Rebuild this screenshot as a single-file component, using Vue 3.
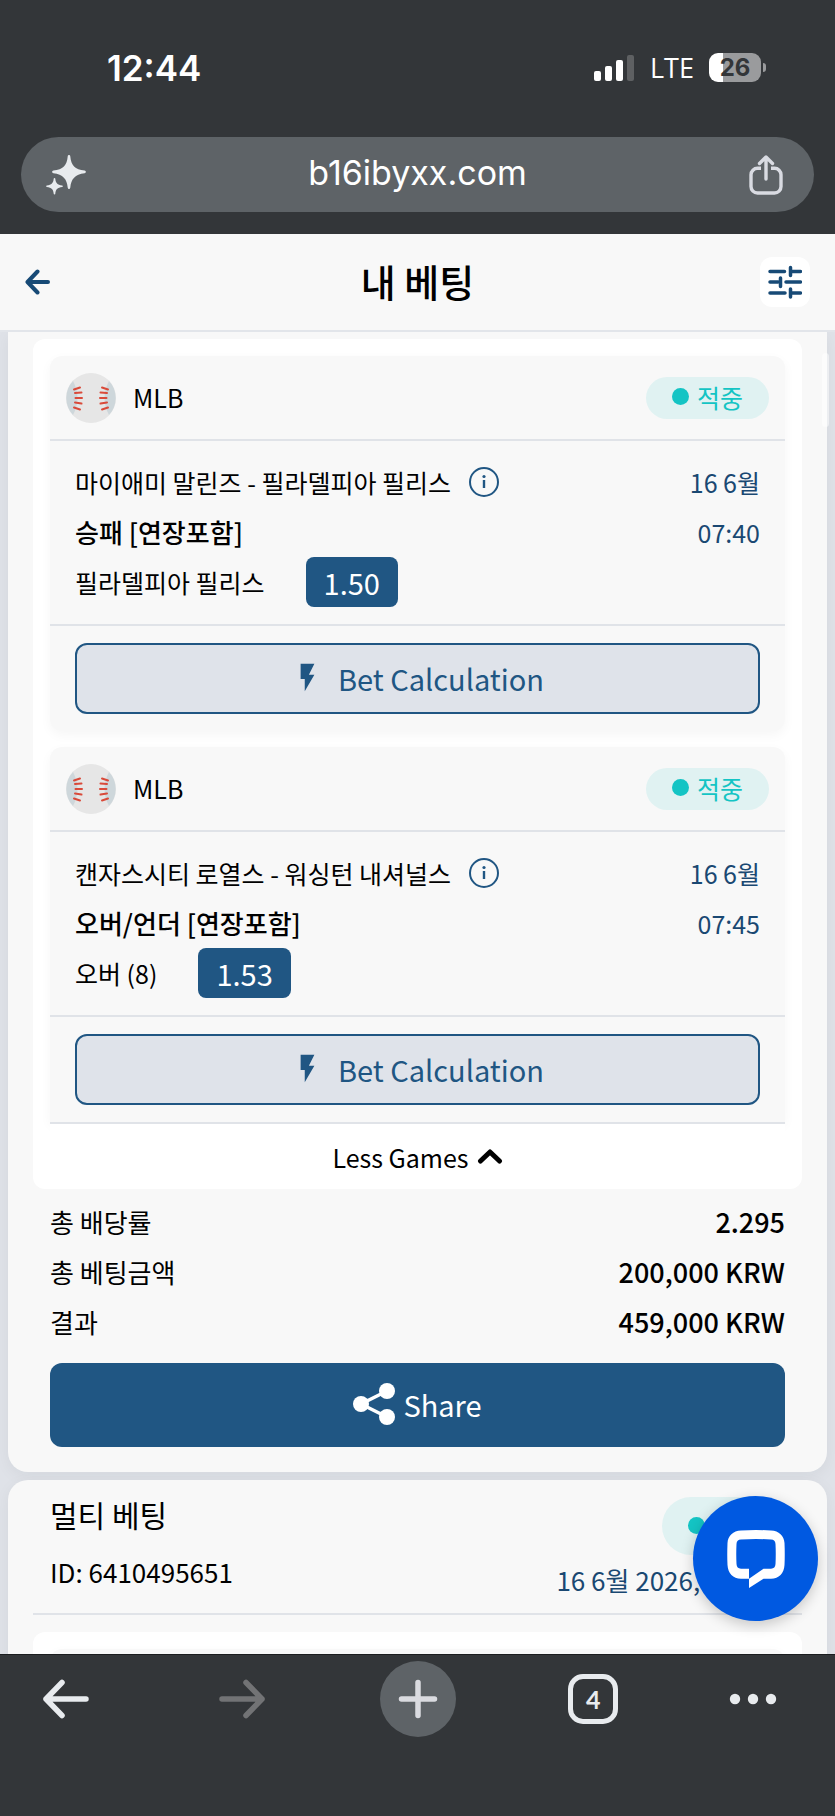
<script setup>
const games = [
  {
    id: 1,
    league: 'MLB',
    status: '적중',
    teams: '마이애미 말린즈 - 필라델피아 필리스',
    date: '16 6월',
    time: '07:40',
    market: '승패 [연장포함]',
    pick: '필라델피아 필리스',
    odds: '1.50',
  },
  {
    id: 2,
    league: 'MLB',
    status: '적중',
    teams: '캔자스시티 로열스 - 워싱턴 내셔널스',
    date: '16 6월',
    time: '07:45',
    market: '오버/언더 [연장포함]',
    pick: '오버 (8)',
    odds: '1.53',
  },
]

const totals = [
  { label: '총 배당률', value: '2.295' },
  { label: '총 베팅금액', value: '200,000 KRW' },
  { label: '결과', value: '459,000 KRW' },
]
</script>

<template>
  <div class="screen">
    <header class="chrome">
      <div class="status">
        <span class="clock">12:44</span>
        <div class="indicators">
          <svg width="41" height="28" viewBox="0 0 41 28" aria-hidden="true">
            <rect x="0" y="17" width="7" height="10" rx="2" fill="#fff" />
            <rect x="11" y="12" width="7" height="15" rx="2" fill="#fff" />
            <rect x="22" y="6" width="7" height="21" rx="2" fill="#fff" />
            <rect x="33" y="1" width="7" height="26" rx="2" fill="#5e6062" />
          </svg>
          <span class="network">LTE</span>
          <div class="battery"><span class="level">26</span></div>
        </div>
      </div>
      <div class="address">
        <button class="plain" aria-label="Assistant">
          <svg width="42" height="42" viewBox="0 0 42 42" fill="#e8ebee">
            <path d="M24 1c.8 0 1.200.6 1.300 1.400C26 11 30 15.400 39.600 16.600c1.700.2 1.700 2.400 0 2.600C30 20.400 26 25 25.300 33.500 25.200 34.400 24.800 35 24 35s-1.200-.6-1.300-1.500C22 25 18 20.400 8.400 19.200c-1.700-.2-1.700-2.400 0-2.600C18 15.400 22 11 22.700 2.400 22.800 1.600 23.200 1 24 1z" />
            <path d="M9.500 24c.5 0 .7.400.8.800.3 4.200 2.200 6.200 6.800 6.700 1 .1 1 1.400 0 1.500-4.600.5-6.500 2.500-6.800 6.700-.1.500-.3.800-.8.800s-.7-.3-.8-.8C8.400 35.500 6.500 33.500 1.900 33c-1-.1-1-1.400 0-1.500 4.600-.5 6.500-2.500 6.800-6.700.1-.4.300-.8.800-.8z" />
          </svg>
        </button>
        <span class="url">b16ibyxx.com</span>
        <button class="plain" aria-label="Share page">
          <svg width="36" height="42" viewBox="0 0 36 42" fill="none" stroke="#d9dbe2" stroke-width="3.400">
            <path d="M13 14.300H9.500a6.500 6.500 0 0 0-6.500 6.500V32.500A6.500 6.500 0 0 0 9.500 39H26.500A6.500 6.500 0 0 0 33 32.500V20.800a6.500 6.500 0 0 0-6.500-6.500H23" />
            <path d="M18 25V3.500M11.500 9.500 18 3l6.500 6.500" stroke-linecap="round" stroke-linejoin="round" />
          </svg>
        </button>
      </div>
    </header>

    <div class="topbar">
      <button class="plain back" aria-label="Back">
        <svg width="26" height="26" viewBox="0 0 26 26" fill="none" stroke="#174a76" stroke-width="4" stroke-linecap="round" stroke-linejoin="round">
          <path d="M23 13H3M12.500 2.500 2.500 13l10 10.500" />
        </svg>
      </button>
      <h1>내 베팅</h1>
      <button class="filter" aria-label="Filter">
        <svg width="34" height="34" viewBox="0 0 34 34" fill="none" stroke="#174a76" stroke-width="3.500" stroke-linecap="round">
          <path d="M2 6.500h14.500M22.500 2.500v8M24 6.500h8.500M2 17h8M12.500 13v8.500M18 17h14.500M2 28h15M22.500 24v8M24 28h8.500" />
        </svg>
      </button>
    </div>

    <main class="content">
      <article class="ticket first">
        <div class="panel">
          <section v-for="game in games" :key="game.id" class="game">
            <div class="game-head">
              <svg width="50" height="50" viewBox="0 0 50 50" aria-hidden="true">
                <circle cx="25" cy="25" r="25" fill="#e6e6e6" />
                <path d="M7 8a25 25 0 0 0 0 34q9-17 0-34zM43 8a25 25 0 0 1 0 34q-9-17 0-34z" fill="#ced7db" />
                <g stroke="#d94a3a" stroke-width="2" stroke-linecap="round">
                  <path d="m8 16.500 6-2M9 20l6.500-.500M9.500 25H16M9 29.500l6.500 1M8 34.500l6 2M42 16.500l-6-2M41 20l-6.500-.500M40.500 25H34M41 29.500l-6.500 1M42 34.500l-6 2" />
                </g>
              </svg>
              <span class="league">{{ game.league }}</span>
              <span class="badge"><i class="dot"></i>{{ game.status }}</span>
            </div>
            <div class="game-body">
              <div class="line">
                <span>{{ game.teams }}</span>
                <button class="plain info" aria-label="Match info">
                  <svg width="30" height="30" viewBox="0 0 30 30">
                    <circle cx="15" cy="15" r="14" fill="none" stroke="#205683" stroke-width="2" />
                    <path d="M15 13v8" stroke="#205683" stroke-width="2.400" />
                    <circle cx="15" cy="9.500" r="1.600" fill="#205683" />
                  </svg>
                </button>
                <span class="when">{{ game.date }}</span>
              </div>
              <div class="line">
                <strong>{{ game.market }}</strong>
                <span class="when">{{ game.time }}</span>
              </div>
              <div class="line">
                <span>{{ game.pick }}</span>
                <span class="odds">{{ game.odds }}</span>
              </div>
            </div>
            <div class="game-foot">
              <button class="calc">
                <svg width="33" height="33" viewBox="0 0 24 24" fill="#205683" aria-hidden="true">
                  <path d="M7 2v11h3v9l7-12h-4l4-8z" />
                </svg>
                Bet Calculation
              </button>
            </div>
          </section>
          <button class="less">
            Less Games
            <svg width="26" height="18" viewBox="0 0 26 18" fill="none" stroke="#000" stroke-width="5" stroke-linecap="round" stroke-linejoin="round" aria-hidden="true">
              <path d="m3.500 13 9.500-9 9.500 9" />
            </svg>
          </button>
        </div>
        <dl class="totals">
          <div v-for="row in totals" :key="row.label" class="total">
            <dt>{{ row.label }}</dt>
            <dd>{{ row.value }}</dd>
          </div>
        </dl>
        <button class="share">
          <svg width="42" height="42" viewBox="0 0 42 42" fill="#fff" aria-hidden="true">
            <path d="M34 8 8 21l26 13" fill="none" stroke="#fff" stroke-width="3.500" />
            <circle cx="34" cy="8" r="8" />
            <circle cx="8" cy="21" r="8" />
            <circle cx="34" cy="34" r="8" />
          </svg>
          Share
        </button>
      </article>

      <article class="ticket">
        <div class="ticket-head">
          <div class="ticket-side">
            <h2>멀티 베팅</h2>
            <span class="ticket-id">ID: 6410495651</span>
          </div>
          <div class="ticket-side end">
            <span class="badge tall"><i class="dot"></i>적중</span>
            <span class="ticket-date">16 6월 2026, 07:22</span>
          </div>
        </div>
        <div class="panel">
          <section class="game stub"></section>
        </div>
      </article>

      <div class="thumb"></div>
      <button class="chat" aria-label="Open chat">
        <svg width="58" height="58" viewBox="0 0 58 58" aria-hidden="true">
          <path
            fill="#fff"
            fill-rule="evenodd"
            d="M14 .5Q29-.5 44 .5C52 1 57 5.500 57.500 13q.5 11.500 0 22C57 43.500 52 48.500 44 48.700H36.500L22 58V48.700H14C6 48.500 1 43.500.5 35Q0 25 .5 13C1 5.500 6 1 14 .5zM14 9.500c-3 .2-4.300 1.500-4.500 4.500q-.5 10 0 20c.2 3 1.500 4.500 4.500 4.700h8v10l14.500-10H44c3-.2 4.300-1.700 4.500-4.700q.5-10 0-20c-.2-3-1.500-4.300-4.500-4.500q-15-1-30 0z"
          />
        </svg>
      </button>
    </main>

    <nav class="toolbar">
      <button class="plain tool" aria-label="Back">
        <svg width="48" height="40" viewBox="0 0 48 40" fill="none" stroke="#e8ebee" stroke-width="5.500" stroke-linecap="round" stroke-linejoin="round">
          <path d="M44 20H4M20 3.500 4 20l16 16.500" />
        </svg>
      </button>
      <button class="plain tool" aria-label="Forward">
        <svg width="48" height="40" viewBox="0 0 48 40" fill="none" stroke="#727375" stroke-width="5.500" stroke-linecap="round" stroke-linejoin="round">
          <path d="M4 20h40M28 3.500 44 20 28 36.500" />
        </svg>
      </button>
      <button class="plain tool add" aria-label="New tab">
        <svg width="40" height="40" viewBox="0 0 40 40" fill="none" stroke="#dadbe0" stroke-width="5.500" stroke-linecap="round">
          <path d="M20 3.500v33M3.500 20h33" />
        </svg>
      </button>
      <button class="plain tool" aria-label="Tabs"><span class="tabs">4</span></button>
      <button class="plain tool more" aria-label="More">
        <svg width="48" height="12" viewBox="0 0 48 12" fill="#e8ebee">
          <circle cx="6" cy="6" r="5.200" />
          <circle cx="24" cy="6" r="5.200" />
          <circle cx="42" cy="6" r="5.200" />
        </svg>
      </button>
    </nav>
  </div>
</template>

<style>
body {
  margin: 0;
}
</style>

<style scoped>
* {
  box-sizing: border-box;
}
.screen {
  display: flex;
  flex-direction: column;
  height: 100vh;
  background: #dfe2e8;
  color: #000;
  font-family: "Noto Sans CJK KR", "Noto Sans", sans-serif;
  font-size: 25px;
  line-height: 36px;
}
button {
  margin: 0;
  border: 0;
  font: inherit;
  color: inherit;
  cursor: pointer;
}
svg {
  display: block;
  flex: none;
}
.plain {
  display: flex;
  align-items: center;
  justify-content: center;
  padding: 0;
  background: none;
}
.chrome {
  flex: none;
  padding: 0 21px 22px;
  background: #333639;
  color: #fff;
  font-family: Inter, "Liberation Sans", sans-serif;
}
.status {
  display: flex;
  align-items: center;
  justify-content: space-between;
  height: 137px;
  padding: 0 48px 2px 86px;
}
.clock {
  font-size: 35px;
  font-weight: 600;
}
.indicators {
  display: flex;
  align-items: center;
  gap: 15px;
}
.network {
  font-family: "Open Sans", sans-serif;
  font-size: 27px;
  font-weight: 500;
}
.battery {
  position: relative;
  width: 52px;
  height: 29px;
  margin-right: 5px;
  border-radius: 9px;
  background: linear-gradient(90deg, #fff 14px, #9a9b9d 14px);
  color: #333639;
  font-size: 24px;
  font-weight: 700;
  line-height: 29px;
  text-align: center;
}
.battery::after {
  content: "";
  position: absolute;
  top: 10px;
  right: -5px;
  width: 3px;
  height: 9px;
  border-radius: 0 4px 4px 0;
  background: #9a9b9d;
}
.address {
  display: flex;
  align-items: center;
  justify-content: space-between;
  height: 75px;
  padding: 0 30px 0 24px;
  border-radius: 38px;
  background: #5e6367;
}
.url {
  padding-bottom: 3px;
  font-size: 34px;
}
.topbar {
  flex: none;
  display: grid;
  grid-template-columns: 1fr auto 1fr;
  align-items: center;
  height: 98px;
  padding: 0 25px;
  border-bottom: 2px solid #e2e5ea;
  background: #f8f8f8;
}
.back {
  justify-self: start;
}
h1 {
  margin: 0;
  padding-bottom: 2px;
  font-size: 38px;
  font-weight: 500;
  line-height: 50px;
}
.filter {
  display: grid;
  place-items: center;
  justify-self: end;
  width: 50px;
  height: 50px;
  padding: 0;
  border-radius: 12px;
  background: #fff;
}
.content {
  position: relative;
  display: flex;
  flex: 1;
  flex-direction: column;
  gap: 8px;
  min-height: 0;
  padding: 0 8px;
  overflow: hidden;
}
.ticket {
  flex: none;
  padding: 0 25px 25px;
  border-radius: 20px;
  background: #f8f8f8;
  box-shadow: 0 4px 16px rgba(0, 40, 30, 0.05);
}
.first {
  padding-top: 7px;
  border-radius: 0 0 20px 20px;
}
.panel {
  display: flex;
  flex-direction: column;
  padding: 17px 17px 0;
  border-radius: 12px;
  background: #fff;
}
.game {
  border-radius: 12px;
  background: #f8f8f8;
  box-shadow: 0 4px 12px rgba(0, 0, 0, 0.04);
}
.game + .game {
  margin-top: 16px;
  border-radius: 12px 12px 0 0;
}
.stub {
  height: 60px;
}
.game-head {
  display: flex;
  align-items: center;
  height: 85px;
  padding: 0 16px;
  border-bottom: 2px solid #e0e3e8;
}
.league {
  margin-left: 17px;
  padding-bottom: 2px;
}
.badge {
  display: flex;
  align-items: center;
  gap: 8px;
  height: 42px;
  margin-left: auto;
  padding: 0 26px 2px;
  border-radius: 30px;
  background: #e0f2f2;
  color: #14c4c4;
}
.tall {
  height: 58px;
}
.dot {
  width: 17px;
  height: 17px;
  border-radius: 50%;
  background: #14c4c4;
}
.game-body {
  padding: 16px 25px 17px;
  border-bottom: 2px solid #e0e3e8;
}
.line {
  display: flex;
  align-items: center;
  height: 50px;
}
.line strong {
  font-size: 26px;
  font-weight: 500;
}
.info {
  margin-left: 18px;
}
.when {
  margin-left: auto;
  color: #1a4872;
}
.odds {
  margin-left: 41px;
  padding: 0 18px;
  border-radius: 8px;
  background: #205683;
  color: #fff;
  font-size: 29px;
  line-height: 50px;
}
.game-foot {
  padding: 17px 25px;
}
.calc {
  display: flex;
  align-items: center;
  justify-content: center;
  gap: 14px;
  width: 100%;
  height: 71px;
  padding: 0 0 2px;
  border: 2px solid #205683;
  border-radius: 12px;
  background: #dfe3ea;
  color: #205683;
  font-size: 29px;
}
.less {
  display: flex;
  align-items: center;
  justify-content: center;
  gap: 8px;
  height: 67px;
  padding: 0;
  border-top: 2px solid #e0e3e8;
  background: #fff;
  border-radius: 0 0 12px 12px;
}
.totals {
  margin: 0;
  padding: 8px 17px 16px;
  font-size: 26px;
}
.total {
  display: flex;
  align-items: center;
  justify-content: space-between;
  height: 50px;
}
dd {
  margin: 0;
  font-size: 27px;
  font-weight: 500;
}
.share {
  display: flex;
  align-items: center;
  justify-content: center;
  gap: 8px;
  width: calc(100% - 34px);
  height: 84px;
  margin: 0 17px;
  padding: 0 0 2px;
  border-radius: 12px;
  background: #205683;
  color: #fff;
  font-size: 29px;
}
.ticket-head {
  display: flex;
  justify-content: space-between;
  height: 135px;
  margin-bottom: 17px;
  padding: 14px 17px 0;
  border-bottom: 2px solid #e0e3e8;
}
.ticket-side {
  display: flex;
  flex-direction: column;
  gap: 20px;
}
.end {
  align-items: flex-end;
  gap: 7px;
  padding-top: 3px;
}
h2 {
  margin: 0;
  font-size: 30px;
  font-weight: 400;
  line-height: 40px;
}
.ticket-id,
.ticket-date {
  font-size: 26px;
}
.ticket-date {
  padding-right: 14px;
  color: #1a4872;
}
.thumb {
  position: absolute;
  top: 21px;
  right: 6px;
  width: 7px;
  height: 74px;
  border-radius: 4px;
  background: rgba(255, 255, 255, 0.5);
}
.chat {
  position: absolute;
  right: 17px;
  bottom: 33px;
  display: grid;
  place-items: center;
  width: 125px;
  height: 125px;
  padding: 0;
  border-radius: 50%;
  background: #0059e1;
  box-shadow: 0 4px 14px rgba(0, 0, 0, 0.2);
}
.toolbar {
  flex: none;
  display: flex;
  align-items: flex-start;
  justify-content: space-between;
  height: 162px;
  padding: 6px 60px 0 28px;
  border-top: 1px solid #1b1d1f;
  background: #333639;
  color: #e8ebee;
}
.tool {
  width: 76px;
  height: 76px;
}
.add {
  border-radius: 50%;
  background: #5e6367;
}
.more {
  width: 44px;
}
.tabs {
  width: 50px;
  height: 50px;
  border: 5px solid #e8ebee;
  border-radius: 15px;
  font-family: Lato, sans-serif;
  font-size: 25px;
  font-weight: 700;
  line-height: 41px;
}
</style>
